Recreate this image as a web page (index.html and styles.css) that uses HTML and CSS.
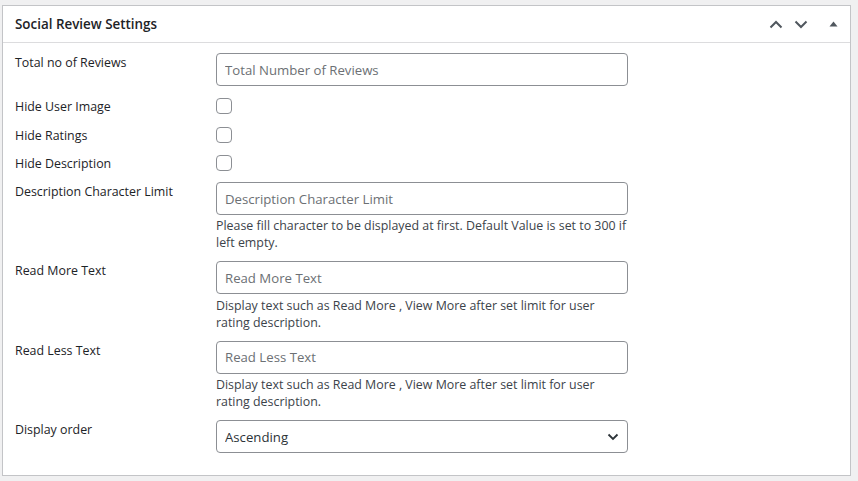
FILE: index.html
```html
<!DOCTYPE html>
<html lang="en">
<head>
<meta charset="utf-8">
<title>Social Review Settings</title>
<link rel="stylesheet" href="styles.css">
</head>
<body>
<div class="postbox">
  <div class="postbox-header">
    <h2 class="hndle">Social Review Settings</h2>
    <div class="handle-actions">
      <button class="handle-btn" aria-label="Move up">
        <svg width="14" height="9" viewBox="0 0 14 9"><path d="M1.5 7.5 L7 2 L12.5 7.5" fill="none" stroke="#50575e" stroke-width="2"/></svg>
      </button>
      <button class="handle-btn" aria-label="Move down">
        <svg width="14" height="9" viewBox="0 0 14 9"><path d="M1.5 1.5 L7 7 L12.5 1.5" fill="none" stroke="#50575e" stroke-width="2"/></svg>
      </button>
      <button class="handle-btn toggle" aria-label="Toggle panel">
        <svg width="9" height="6" viewBox="0 0 9 6"><path d="M0.5 5.5 L4.5 0.5 L8.5 5.5 Z" fill="#50575e"/></svg>
      </button>
    </div>
  </div>
  <div class="inside">
    <div class="field-row">
      <label class="field-label">Total no of Reviews</label>
      <div class="field-control"><input class="text-input" type="text" placeholder="Total Number of Reviews"></div>
    </div>
    <div class="field-row check-row">
      <label class="field-label">Hide User Image</label>
      <div class="field-control"><input class="check" type="checkbox"></div>
    </div>
    <div class="field-row check-row">
      <label class="field-label">Hide Ratings</label>
      <div class="field-control"><input class="check" type="checkbox"></div>
    </div>
    <div class="field-row check-row">
      <label class="field-label">Hide Description</label>
      <div class="field-control"><input class="check" type="checkbox"></div>
    </div>
    <div class="field-row">
      <label class="field-label">Description Character Limit</label>
      <div class="field-control">
        <input class="text-input" type="text" placeholder="Description Character Limit">
        <p class="description">Please fill character to be displayed at first. Default Value is set to 300 if left empty.</p>
      </div>
    </div>
    <div class="field-row">
      <label class="field-label">Read More Text</label>
      <div class="field-control">
        <input class="text-input" type="text" placeholder="Read More Text">
        <p class="description">Display text such as Read More , View More after set limit for user rating description.</p>
      </div>
    </div>
    <div class="field-row">
      <label class="field-label">Read Less Text</label>
      <div class="field-control">
        <input class="text-input" type="text" placeholder="Read Less Text">
        <p class="description">Display text such as Read More , View More after set limit for user rating description.</p>
      </div>
    </div>
    <div class="field-row">
      <label class="field-label">Display order</label>
      <div class="field-control select-wrap">
        <select class="select-input">
          <option>Ascending</option>
          <option>Descending</option>
        </select>
        <svg class="select-arrow" width="12" height="8" viewBox="0 0 12 8"><path d="M1.5 1.5 L6 6 L10.5 1.5" fill="none" stroke="#2c3338" stroke-width="1.8"/></svg>
      </div>
    </div>
  </div>
</div>
</body>
</html>
```

FILE: styles.css
```css
html, body {
  margin: 0;
  padding: 0;
  background: #f0f0f1;
}

body {
  padding: 5px 7px 5px 2px;
  font-family: "Open Sans", "Noto Sans", sans-serif;
  color: #1d2327;
}

.postbox {
  background: #fff;
  border: 1px solid #c3c4c7;
  box-sizing: border-box;
  height: 471px;
}

.postbox-header {
  height: 37px;
  box-sizing: border-box;
  border-bottom: 1px solid #dcdcde;
  display: flex;
  align-items: center;
  justify-content: space-between;
  padding: 0 8px 0 12px;
}

.hndle {
  margin: 0;
  font-size: 13.4px;
  font-weight: 600;
  color: #1d2327;
}

.handle-actions {
  display: flex;
  align-items: center;
}

.handle-btn {
  border: 0;
  background: transparent;
  padding: 0;
  width: 25px;
  height: 20px;
  display: flex;
  align-items: center;
  justify-content: center;
}

.handle-btn.toggle {
  width: 18px;
  margin-left: 11px;
}

.inside {
  padding: 10px 12px 0 12px;
}

.field-row {
  display: grid;
  grid-template-columns: 201px 412px;
  margin-bottom: 10px;
}

.field-label {
  font-size: 12.4px;
  line-height: 17px;
  padding-top: 1px;
  color: #1d2327;
}

.check-row {
  height: 18.7px;
}

.check-row .field-label {
  padding-top: 2px;
}

.field-control {
  display: flex;
  flex-direction: column;
}

.text-input,
.select-input {
  box-sizing: border-box;
  width: 412px;
  height: 33px;
  margin: 0;
  border: 1px solid #8c8f94;
  border-radius: 4px;
  padding: 0 8px;
  font-family: "Open Sans", "Noto Sans", sans-serif;
  font-size: 13.2px;
  color: #2c3338;
  background: #fff;
}

.text-input::placeholder {
  color: #6c7074;
  opacity: 1;
}

.check {
  appearance: none;
  -webkit-appearance: none;
  box-sizing: border-box;
  width: 16px;
  height: 16px;
  margin: 2px 0 0 0;
  border: 1px solid #8c8f94;
  border-radius: 4px;
  background: #fff;
}

.description {
  margin: 2.4px 0 0 0;
  font-size: 12.4px;
  line-height: 17px;
  color: #3c434a;
}

.select-wrap {
  position: relative;
}

.select-input {
  appearance: none;
  -webkit-appearance: none;
}

.select-arrow {
  position: absolute;
  right: 9px;
  top: 13px;
  pointer-events: none;
}
```
